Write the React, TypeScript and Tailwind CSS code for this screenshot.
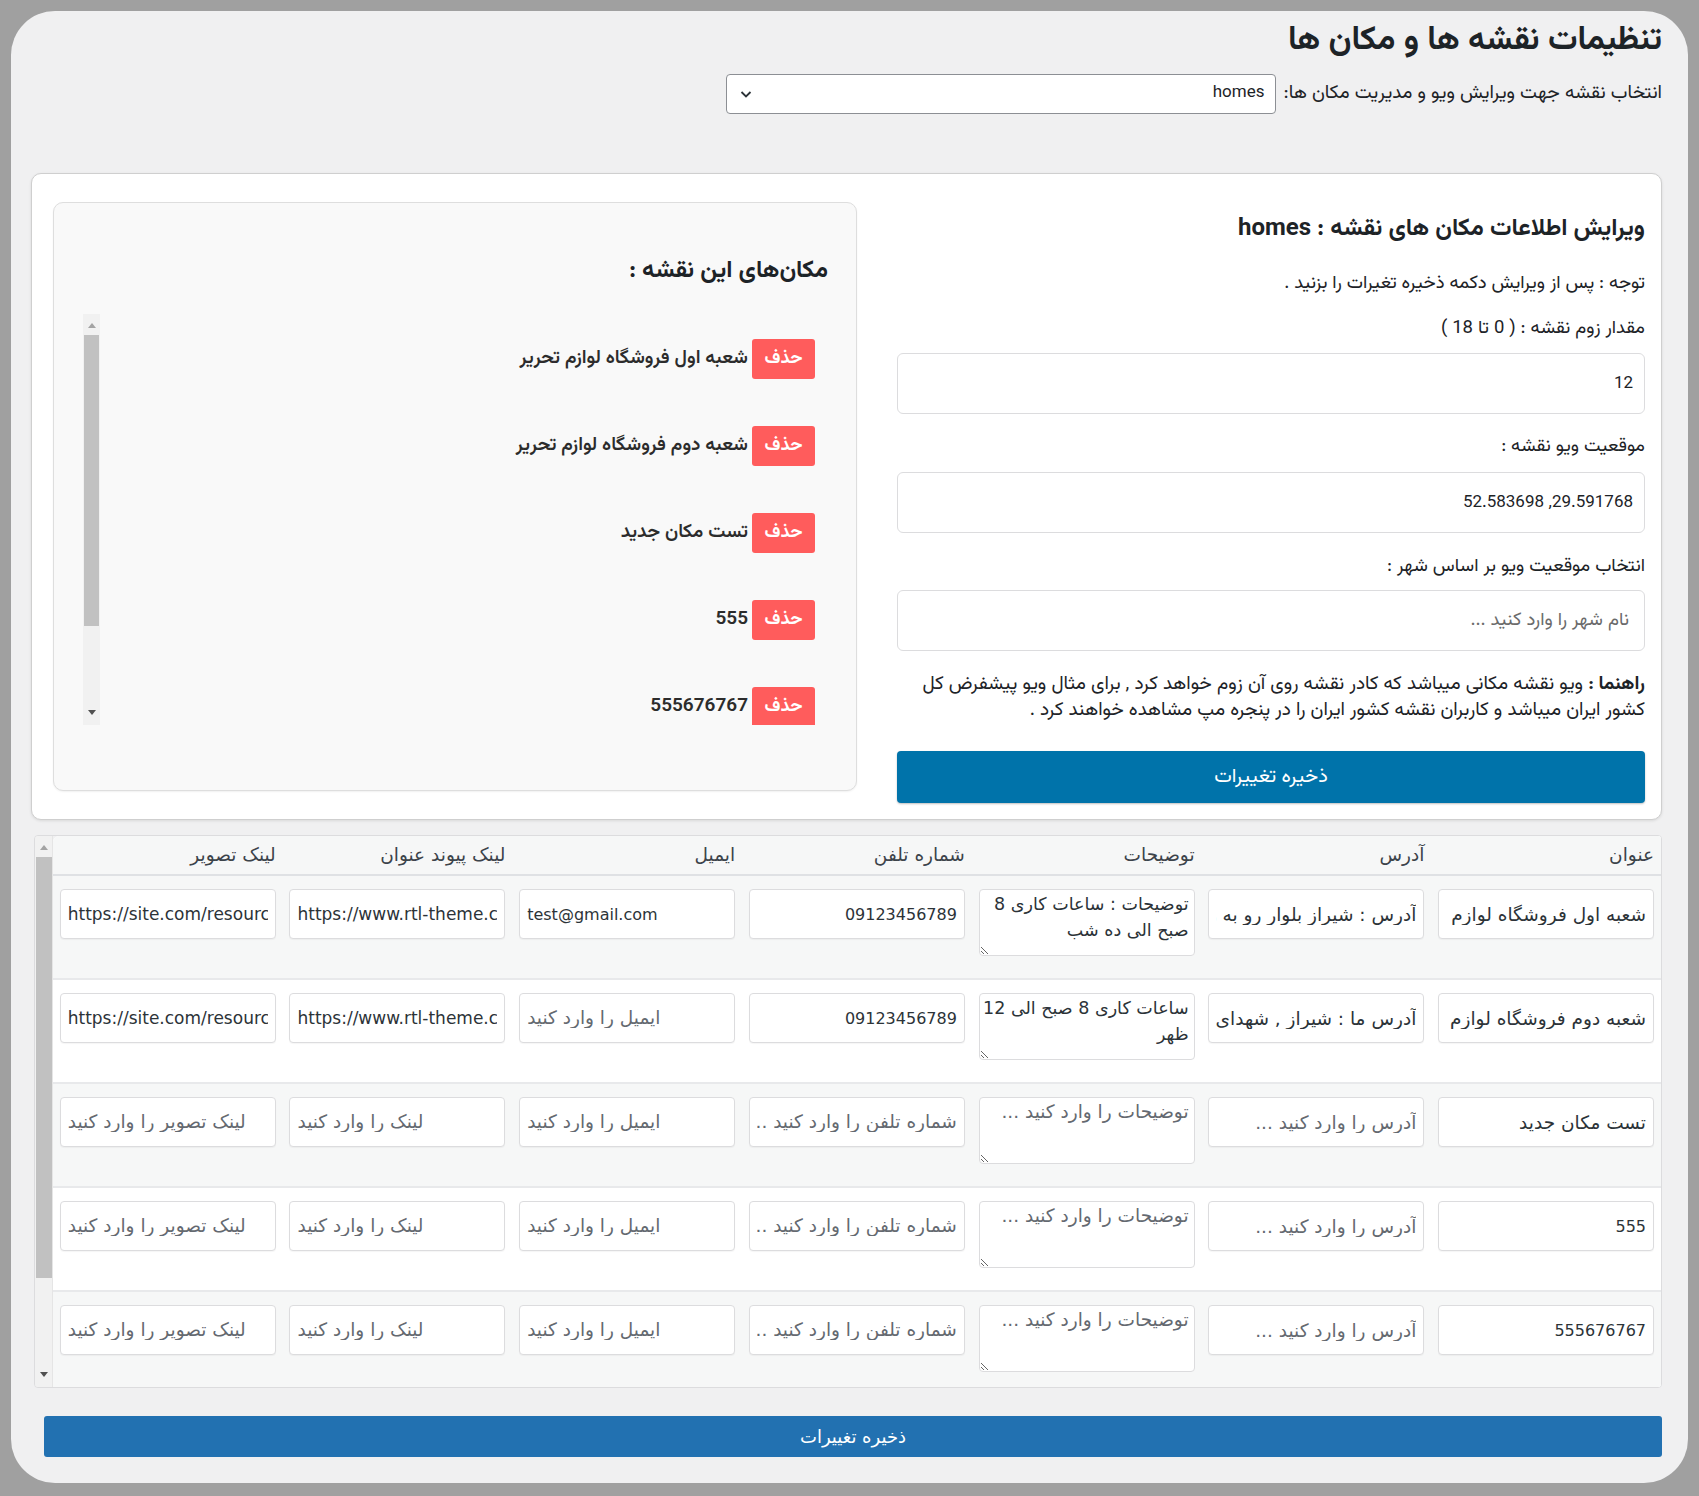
import React from "react";

const rows = [
  {
    bg: "bg-[#f6f7f7]",
    title: "شعبه اول فروشگاه لوازم تحریر",
    address: "آدرس : شیراز بلوار رو به روی پارک",
    desc: "توضیحات : ساعات کاری 8 صبح الی ده شب",
    phone: "09123456789",
    email: "test@gmail.com",
    link: "https://www.rtl-theme.com/shop",
    img: "https://site.com/resources/image.jpg",
  },
  {
    bg: "bg-white",
    title: "شعبه دوم فروشگاه لوازم تحریر",
    address: "آدرس ما : شیراز , شهدای : خیابان اول",
    desc: "ساعات کاری 8 صبح الی 12 ظهر",
    phone: "09123456789",
    email: "",
    link: "https://www.rtl-theme.com/shop",
    img: "https://site.com/resources/image.jpg",
  },
  { bg: "bg-[#f6f7f7]", title: "تست مکان جدید", address: "", desc: "", phone: "", email: "", link: "", img: "" },
  { bg: "bg-white", title: "555", address: "", desc: "", phone: "", email: "", link: "", img: "" },
  { bg: "bg-[#f6f7f7]", title: "555676767", address: "", desc: "", phone: "", email: "", link: "", img: "" },
];

const places = [
  "شعبه اول فروشگاه لوازم تحریر",
  "شعبه دوم فروشگاه لوازم تحریر",
  "تست مکان جدید",
  "555",
  "555676767",
];

const inputBase =
  "w-[216px] h-[50px] bg-white border border-[#dcdcde] rounded-[4px] px-[7px] text-[#2c3338] placeholder:text-[#646970] outline-none shadow-[0_1px_1px_rgba(0,0,0,0.04)]";
const arInput = inputBase + " text-[18.5px]";
const numInput = inputBase + " text-[16px] placeholder:text-[18.5px]";
const urlInput = inputBase + " text-[17px] placeholder:text-[18.5px]";

function Tri({ up }: { up?: boolean }) {
  return (
    <svg width="8" height="6" viewBox="0 0 8 6" className="block">
      {up ? <path d="M0 6 L4 1 L8 6 Z" fill="#a3a3a3" /> : <path d="M0 0 L4 5 L8 0 Z" fill="#505050" />}
    </svg>
  );
}

export default function App() {
  return (
    <div className="w-[1699px] h-[1496px] bg-[#a0a0a0] pt-[11px] pl-[11px] pr-[11px] pb-[13px]">
      <div
        dir="rtl"
        className="h-full bg-[#f0f0f1] rounded-[44px] pr-[26px] pl-[20px] pt-[10px] text-[#1d2327]"
        style={{ fontFamily: '"Vazirmatn","Noto Sans Arabic","DejaVu Sans",sans-serif' }}
      >
        {/* Title */}
        <h1 className="text-[33px] leading-[40px] font-bold m-0">تنظیمات نقشه ها و مکان ها</h1>

        {/* Select row */}
        <div className="flex items-center gap-[8px] mt-[13px]">
          <label className="text-[19px] leading-[24px] text-[#1d2327]">انتخاب نقشه جهت ویرایش ویو و مدیریت مکان ها:</label>
          <div className="w-[550px] h-[40px] bg-white border border-[#8c8f94] rounded-[4px] flex items-center justify-between pr-[10px] pl-[12px]">
            <span className="text-[17px]">homes</span>
            <svg width="14" height="14" viewBox="0 0 14 14">
              <path d="M2.5 5 L7 9.5 L11.5 5" fill="none" stroke="#2c3338" strokeWidth="1.8" />
            </svg>
          </div>
        </div>

        {/* Main card */}
        <div className="mt-[59px] w-[1631px] h-[647px] bg-white border border-[#cfcfcf] rounded-[10px] shadow-[0_1px_3px_rgba(0,0,0,0.10)] flex items-start pr-[16px] pl-[21px] pt-[28px]">
          {/* Right form column */}
          <div className="w-[748px] flex flex-col">
            <h2 className="text-[24px] leading-[30px] font-bold mt-[12px]">ویرایش اطلاعات مکان های نقشه : homes</h2>
            <p className="text-[18.5px] leading-[26px] mt-[27px]">توجه : پس از ویرایش دکمه ذخیره تغیرات را بزنید .</p>
            <p className="text-[18.5px] leading-[26px] mt-[19px]">مقدار زوم نقشه : ( 0 تا 18 )</p>
            <input
              readOnly
              defaultValue="12"
              className="mt-[11px] h-[61px] w-full border border-[#dcdcde] rounded-[6px] px-[11px] text-[17px] bg-white outline-none"
            />
            <p className="text-[18.5px] leading-[26px] mt-[20px]">موقعیت ویو نقشه :</p>
            <input
              readOnly
              defaultValue="29.591768, 52.583698"
              className="mt-[12px] h-[61px] w-full border border-[#dcdcde] rounded-[6px] px-[11px] text-[17px] bg-white outline-none"
            />
            <p className="text-[18.5px] leading-[26px] mt-[21px]">انتخاب موقعیت ویو بر اساس شهر :</p>
            <input
              readOnly
              placeholder="نام شهر را وارد کنید ..."
              className="mt-[10px] h-[61px] w-full border border-[#dcdcde] rounded-[6px] px-[15px] text-[18.5px] bg-white outline-none placeholder:text-[#6b6b6b]"
            />
            <p className="text-[19px] leading-[26px] mt-[21px] whitespace-nowrap">
              <b>راهنما :</b> ویو نقشه مکانی میباشد که کادر نقشه روی آن زوم خواهد کرد , برای مثال ویو پیشفرض کل
              <br />
              کشور ایران میباشد و کاربران نقشه کشور ایران را در پنجره مپ مشاهده خواهند کرد .
            </p>
            <button className="mt-[27px] h-[52px] w-full bg-[#0073aa] text-white text-[20px] rounded-[4px] shadow-[0_1px_2px_rgba(0,0,0,0.25)]">
              ذخیره تغییرات
            </button>
          </div>

          {/* Left panel */}
          <div className="mr-[40px] w-[804px] h-[589px] bg-[#f9f9f9] border border-[#dedede] rounded-[10px] shadow-[0_1px_2px_rgba(0,0,0,0.06)] pr-[28px] pl-[29px] pt-[53px]">
            <h3 className="text-[24px] leading-[30px] font-bold">مکان‌های این نقشه :</h3>
            <div className="mt-[28px] h-[411px] flex overflow-hidden">
              <div className="flex-1 pr-[13px] pt-[25px] flex flex-col gap-[47px]">
                {places.map((p) => (
                  <div key={p} className="flex items-center gap-[4px]">
                    <button className="w-[63px] h-[40px] bg-[#ff5c5c] rounded-[3px] text-white text-[18px] font-bold">
                      حذف
                    </button>
                    <span className="text-[19px] font-semibold text-[#2c2c2c]">{p}</span>
                  </div>
                ))}
              </div>
              <div className="w-[17px] h-full bg-[#f1f1f1] flex flex-col items-center">
                <div className="h-[21px] flex items-center justify-center">
                  <Tri up />
                </div>
                <div className="w-[15px] h-[291px] bg-[#c1c1c1]" />
                <div className="flex-1" />
                <div className="h-[24px] flex items-center justify-center">
                  <Tri />
                </div>
              </div>
            </div>
          </div>
        </div>

        {/* Table block */}
        <div
          className="mt-[15px] ml-[3px] w-[1628px] h-[553px] border border-[#dcdcde] rounded-[4px] bg-[#f0f0f1] flex overflow-hidden"
          style={{ fontFamily: '"DejaVu Sans",sans-serif' }}
        >
          <div className="flex-1 bg-white rounded-tl-[6px] overflow-hidden">
            <div className="grid grid-cols-7 h-[40px] bg-[#f6f7f7] border-b-2 border-[#dfe1e4] text-[18.5px] text-[#3c434a]">
              {["عنوان", "آدرس", "توضیحات", "شماره تلفن", "ایمیل", "لینک پیوند عنوان", "لینک تصویر"].map((h) => (
                <div key={h} className="pr-[7px] flex items-center">
                  {h}
                </div>
              ))}
            </div>
            {rows.map((r, i) => (
              <div key={i} className={`grid grid-cols-7 h-[104px] border-b-2 border-[#e8e9eb] ${r.bg}`}>
                <div className="pr-[7px] pt-[13px]">
                  <input
                    readOnly
                    defaultValue={r.title}
                    placeholder="عنوان را وارد کنید ..."
                    className={/^\d+$/.test(r.title) ? numInput : arInput}
                  />
                </div>
                <div className="pr-[7px] pt-[13px]">
                  <input readOnly defaultValue={r.address} placeholder="آدرس را وارد کنید ..." className={arInput} />
                </div>
                <div className="pr-[7px] pt-[13px]">
                  <textarea
                    readOnly
                    defaultValue={r.desc}
                    placeholder="توضیحات را وارد کنید ..."
                    className="block w-[216px] h-[67px] bg-white border border-[#dcdcde] rounded-[4px] pl-[3px] pr-[5px] pt-[1px] text-[17.5px] leading-[26px] text-[#2c3338] placeholder:text-[18.5px] placeholder:text-[#646970] outline-none"
                  />
                </div>
                <div className="pr-[7px] pt-[13px]">
                  <input readOnly defaultValue={r.phone} placeholder="شماره تلفن را وارد کنید .." className={numInput} />
                </div>
                <div className="pr-[7px] pt-[13px]">
                  <input readOnly dir="ltr" defaultValue={r.email} placeholder="ایمیل را وارد کنید" className={numInput} />
                </div>
                <div className="pr-[7px] pt-[13px]">
                  <input readOnly dir="ltr" defaultValue={r.link} placeholder="لینک را وارد کنید" className={urlInput} />
                </div>
                <div className="pr-[7px] pt-[13px]">
                  <input readOnly dir="ltr" defaultValue={r.img} placeholder="لینک تصویر را وارد کنید" className={urlInput} />
                </div>
              </div>
            ))}
          </div>
          <div className="w-[18px] h-full bg-[#f1f1f1] border-r border-[#e5e5e5] flex flex-col items-center">
            <div className="h-[21px] flex items-center justify-center">
              <Tri up />
            </div>
            <div className="w-[16px] h-[421px] bg-[#c1c1c1]" />
            <div className="flex-1" />
            <div className="h-[24px] flex items-center justify-center">
              <Tri />
            </div>
          </div>
        </div>

        {/* Bottom save */}
        <button
          className="mt-[28px] w-[1618px] h-[41px] bg-[#2271b1] text-white text-[18px] rounded-[3px] block"
          style={{ fontFamily: '"DejaVu Sans",sans-serif' }}
        >
          ذخیره تغییرات
        </button>
      </div>
    </div>
  );
}
